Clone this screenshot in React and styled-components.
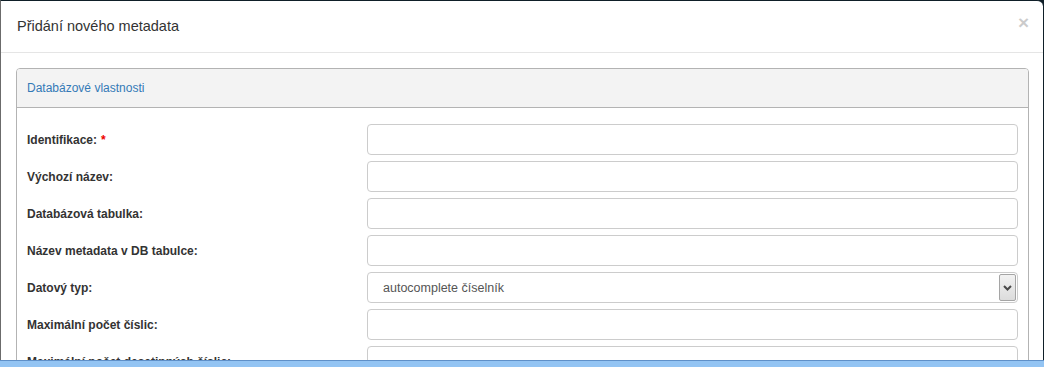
import React from "react";
import styled, { createGlobalStyle } from "styled-components";

const GlobalStyle = createGlobalStyle`
  html, body {
    margin: 0;
    padding: 0;
    height: 100%;
    overflow: hidden;
    background: #0f1f28;
    font-family: "Liberation Sans", Arial, sans-serif;
  }
  * { box-sizing: border-box; }
`;

const Modal = styled.div`
  width: 1043px;
  background: #fff;
  border-top: 1px solid #0f1f28;
  border-left: 1px solid #6b6b6b;
  border-top-right-radius: 6px;
  min-height: 400px;
`;

const Header = styled.div`
  display: flex;
  align-items: flex-start;
  justify-content: space-between;
  padding: 15px 15px 15px 16px;
  border-bottom: 1px solid #e5e5e5;
`;

const Title = styled.h4`
  margin: 0;
  font-size: 14.5px;
  line-height: 21px;
  font-weight: normal;
  color: #333;
`;

const Close = styled.span`
  font-size: 19px;
  font-weight: bold;
  line-height: 1;
  color: #000;
  opacity: 0.2;
  margin-top: -3px;
  margin-right: -1px;
`;

const Body = styled.div`
  padding: 15px 14px 15px 15px;
`;

const Panel = styled.div`
  border: 1px solid #b3b3b3;
  border-radius: 4px;
  background: #fff;
`;

const PanelHeading = styled.div`
  padding: 10px 10px;
  background: #f3f3f3;
  border-bottom: 1px solid #b3b3b3;
  border-radius: 3px 3px 0 0;
  color: #337ab7;
  font-size: 12px;
  line-height: 18px;
`;

const PanelBody = styled.div`
  padding: 16px 10px;
`;

const Form = styled.div`
  display: grid;
  grid-template-columns: 340px 1fr;
  row-gap: 6px;
`;

const Label = styled.label`
  display: flex;
  align-items: center;
  font-size: 12px;
  font-weight: bold;
  color: #333;
`;

const Required = styled.span`
  color: #e00;
  margin-left: 4px;
`;

const Input = styled.div`
  height: 31px;
  border: 1px solid #ccc;
  border-radius: 4px;
  background: #fff;
`;

const Select = styled(Input)`
  display: flex;
  align-items: center;
  padding: 1px 1px 1px 15px;
`;

const SelectText = styled.span`
  flex: 1;
  font-size: 12.5px;
  color: #555;
`;

const ArrowButton = styled.span`
  display: flex;
  align-items: center;
  justify-content: center;
  width: 17px;
  height: 100%;
  border: 1px solid #a5a5a5;
  border-radius: 2px;
  background: linear-gradient(#f2f2f2, #dcdcdc);
`;

const TaskBar = styled.div`
  position: fixed;
  left: 0;
  right: 0;
  bottom: 0;
  height: 7px;
  border-top: 1px solid #5f90c8;
  background: #93c4f3;
`;

const rows = [
  { label: "Identifikace:", required: true },
  { label: "Výchozí název:" },
  { label: "Databázová tabulka:" },
  { label: "Název metadata v DB tabulce:" },
  { label: "Datový typ:", select: "autocomplete číselník" },
  { label: "Maximální počet číslic:" },
  { label: "Maximální počet desetinných číslic:" },
  { label: "Povinné:" },
];

export default function App() {
  return (
    <>
      <GlobalStyle />
      <Modal>
        <Header>
          <Title>Přidání nového metadata</Title>
          <Close>×</Close>
        </Header>
        <Body>
          <Panel>
            <PanelHeading>Databázové vlastnosti</PanelHeading>
            <PanelBody>
              <Form>
                {rows.map((r) => (
                  <React.Fragment key={r.label}>
                    <Label>
                      {r.label}
                      {r.required && <Required>*</Required>}
                    </Label>
                    {r.select ? (
                      <Select>
                        <SelectText>{r.select}</SelectText>
                        <ArrowButton>
                          <svg width="9" height="6" viewBox="0 0 9 6">
                            <path d="M1 1 L4.5 4.5 L8 1" fill="none" stroke="#4a4a4a" strokeWidth="2" />
                          </svg>
                        </ArrowButton>
                      </Select>
                    ) : (
                      <Input />
                    )}
                  </React.Fragment>
                ))}
              </Form>
            </PanelBody>
          </Panel>
        </Body>
      </Modal>
      <TaskBar />
    </>
  );
}
